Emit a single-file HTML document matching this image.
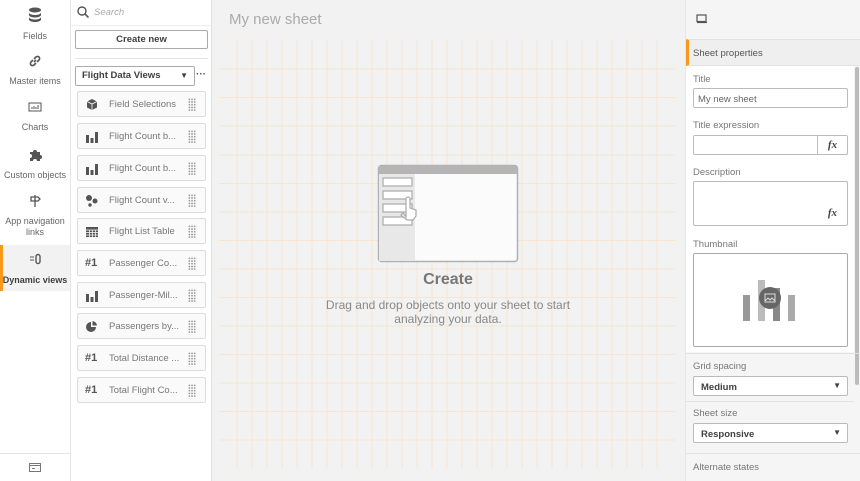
<!DOCTYPE html>
<html><head><meta charset="utf-8"><style>
*{box-sizing:border-box;margin:0;padding:0}
body{width:860px;height:481px;overflow:hidden;font-family:"Liberation Sans",sans-serif;background:#fff;position:relative;color:#595959}
.abs{position:absolute}
.nav{left:0;top:0;width:71px;height:481px;background:#fff;border-right:1px solid #e6e6e6}
.ni{position:absolute;left:0;width:70px;text-align:center;font-size:9px;color:#666;line-height:11px}
.assets{left:71px;top:0;width:141px;height:481px;background:#fff;border-right:1px solid #e0e0e0}
.card{position:absolute;left:6px;width:129px;height:26px;border:1px solid #ddd;border-radius:2px;background:#fafafa;font-size:9.5px;color:#777}
.card .ic{position:absolute;left:7px;top:6px;width:14px;height:13px;font-weight:bold;color:#555;font-size:11px}
.card .t{position:absolute;left:31px;top:7px}
.card .g{position:absolute;right:9px;top:6px;width:8px;height:13px;background-image:radial-gradient(circle,#999 0.7px,transparent 0.9px);background-size:2.7px 2.7px}
.canvas{left:212px;top:0;width:473px;height:481px;background:#f2f2f2}
.right{left:685px;top:0;width:175px;height:481px;background:#f5f5f5;border-left:1px solid #e6e6e6}
.lbl{position:absolute;left:7px;font-size:9.5px;color:#777}
.inp{position:absolute;left:7px;width:155px;border:1px solid #bbb;border-radius:2px;background:#fff;font-size:9.5px;color:#666}
.sec{position:absolute;left:0;width:175px;border-top:1px solid #e3e3e3}
</style></head><body>
<div class="abs nav">
 <div class="ni" style="top:7px"><svg width="14" height="15" viewBox="0 0 14 15"><ellipse cx="7" cy="3" rx="6" ry="2.5" fill="#555"/><path d="M1 5.5c0 1.4 2.7 2.5 6 2.5s6-1.1 6-2.5v2.5c0 1.4-2.7 2.5-6 2.5s-6-1.1-6-2.5zM1 10c0 1.4 2.7 2.5 6 2.5s6-1.1 6-2.5v2.5c0 1.4-2.7 2.5-6 2.5s-6-1.1-6-2.5z" fill="#555"/></svg><div style="margin-top:6px">Fields</div></div>
 <div class="ni" style="top:54px"><svg width="14" height="14" viewBox="0 0 14 14"><path d="M6 8l2-2M5 6L3 8a2 2 0 0 0 3 3l2-2M9 8l2-2a2 2 0 0 0-3-3L6 5" stroke="#555" stroke-width="1.6" fill="none"/></svg><div style="margin-top:5px">Master items</div></div>
 <div class="ni" style="top:101px"><svg width="14" height="12" viewBox="0 0 14 12"><rect x="1" y="2" width="12" height="8" fill="none" stroke="#555"/><path d="M4 8V6M6 8V5M8 8V6M10 8V4" stroke="#555"/></svg><div style="margin-top:6px">Charts</div></div>
 <div class="ni" style="top:148px"><svg width="14" height="14" viewBox="0 0 14 14"><path d="M2 4h3a2 2 0 1 1 4 0h3v3a2 2 0 1 1 0 4v2H9a2 2 0 1 0-4 0H2v-3a2 2 0 1 0 0-4z" fill="#555"/></svg><div style="margin-top:5px">Custom objects</div></div>
 <div class="ni" style="top:194px"><svg width="14" height="14" viewBox="0 0 14 14"><path d="M7 1v12M3 3h7l2 2-2 2H3z" stroke="#555" stroke-width="1.3" fill="none"/></svg><div style="margin-top:5px">App navigation<br>links</div></div>
 <div class="abs" style="left:0;top:245px;width:70px;height:46px;background:#f2f2f2;border-left:3px solid #f8981d"></div>
 <div class="ni" style="top:253px;font-weight:bold;color:#404040"><svg width="14" height="12" viewBox="0 0 14 12"><path d="M2 4h4M2 7h4" stroke="#555"/><rect x="8" y="1.5" width="4" height="9" rx="2" fill="none" stroke="#555" stroke-width="1.4"/></svg><div style="margin-top:7px">Dynamic views</div></div>
 <div class="abs" style="left:0;top:453px;width:70px;border-top:1px solid #e6e6e6"></div>
 <svg class="abs" style="left:29px;top:463px" width="12" height="9" viewBox="0 0 12 9"><rect x=".5" y=".5" width="11" height="8" fill="none" stroke="#777"/><path d="M.5 2.5h11M3 5.5h3" stroke="#777"/></svg>
</div>
<div class="abs assets">
 <svg class="abs" style="left:6px;top:6px" width="12" height="12" viewBox="0 0 12 12"><circle cx="5" cy="5" r="4" fill="none" stroke="#555" stroke-width="1.4"/><path d="M8 8l3.5 3.5" stroke="#555" stroke-width="1.6"/></svg>
 <div class="abs" style="left:23px;top:7px;font-size:9.5px;color:#aaa;font-style:italic">Search</div>
 <div class="abs" style="left:0;top:25px;width:141px;border-top:1px solid #eee"></div>
 <div class="abs" style="left:4px;top:30px;width:133px;height:19px;border:1px solid #aaa;border-radius:2px;font-size:9.5px;font-weight:bold;color:#404040;text-align:center;line-height:17px">Create new</div>
 <div class="abs" style="left:4px;top:58px;width:133px;border-top:1px solid #e6e6e6"></div>
 <div class="abs" style="left:4px;top:66px;width:120px;height:20px;border:1px solid #aaa;border-radius:2px;font-size:9.5px;font-weight:bold;color:#404040;line-height:18px;padding-left:6px">Flight Data Views<span style="position:absolute;right:6px;top:0;font-size:8px">▼</span></div>
 <div class="abs" style="left:125px;top:69px;font-size:10px;font-weight:bold;color:#555">···</div>
 <div class="card" style="top:91px"><svg class="ic" viewBox="0 0 14 13"><path d="M7 1l5 2.5v6L7 12 2 9.5v-6z" fill="#555"/><path d="M2 3.5L7 6l5-2.5M7 6v6" stroke="#fff" stroke-width=".8" fill="none"/></svg><span class="t">Field Selections</span><span class="g"></span></div>
 <div class="card" style="top:123px"><svg class="ic" viewBox="0 0 14 13"><path d="M1 5h3v8H1zM5.5 8h3v5h-3zM10 2h3v11h-3z" fill="#555"/></svg><span class="t">Flight Count b...</span><span class="g"></span></div>
 <div class="card" style="top:155px"><svg class="ic" viewBox="0 0 14 13"><path d="M1 5h3v8H1zM5.5 8h3v5h-3zM10 2h3v11h-3z" fill="#555"/></svg><span class="t">Flight Count b...</span><span class="g"></span></div>
 <div class="card" style="top:187px"><svg class="ic" viewBox="0 0 14 13"><circle cx="4" cy="4" r="3" fill="#555"/><circle cx="10" cy="7" r="2.5" fill="#555"/><circle cx="5" cy="11" r="1.7" fill="#555"/></svg><span class="t">Flight Count v...</span><span class="g"></span></div>
 <div class="card" style="top:218px"><svg class="ic" viewBox="0 0 14 13"><rect x="1" y="2" width="12" height="10" fill="#555"/><path d="M1 5h12M1 7.5h12M1 10h12M4.5 5v7M7.5 5v7M10.5 5v7" stroke="#fff" stroke-width=".7"/></svg><span class="t">Flight List Table</span><span class="g"></span></div>
 <div class="card" style="top:250px"><span class="ic" style="top:6px">#1</span><span class="t">Passenger Co...</span><span class="g"></span></div>
 <div class="card" style="top:282px"><svg class="ic" viewBox="0 0 14 13"><path d="M1 5h3v8H1zM5.5 8h3v5h-3zM10 2h3v11h-3z" fill="#555"/></svg><span class="t">Passenger-Mil...</span><span class="g"></span></div>
 <div class="card" style="top:313px"><svg class="ic" viewBox="0 0 14 13"><path d="M6 2a5 5 0 1 0 5 5H6z" fill="#555"/><path d="M7.5 1a5 5 0 0 1 4.5 4.5H7.5z" fill="#555"/></svg><span class="t">Passengers by...</span><span class="g"></span></div>
 <div class="card" style="top:345px"><span class="ic">#1</span><span class="t">Total Distance ...</span><span class="g"></span></div>
 <div class="card" style="top:377px"><span class="ic">#1</span><span class="t">Total Flight Co...</span><span class="g"></span></div>
</div>
<div class="abs canvas">
 <div class="abs" style="left:17px;top:11px;font-size:15px;color:#aaa">My new sheet</div>
 <svg class="abs" style="left:0;top:0" width="473" height="481">
  <g stroke="#f9e2c8" stroke-width="1" opacity="0.8">
   <path d="M25 40V468M40 40V468M55 40V468M70 40V468M85 40V468M100 40V468M115 40V468M130 40V468M145 40V468M160 40V468M175 40V468M190 40V468M205 40V468M220 40V468M235 40V468M250 40V468M265 40V468M280 40V468M295 40V468M310 40V468M325 40V468M340 40V468M355 40V468M370 40V468M385 40V468M400 40V468M415 40V468M430 40V468M445 40V468"/>
   <path d="M7 69H463M7 97.5H463M7 126H463M7 155H463M7 183.5H463M7 212H463M7 240.5H463M7 269H463M7 297.5H463M7 326H463M7 354.5H463M7 383H463M7 411.5H463M7 440H463"/>
  </g>
  <g transform="translate(166,165)">
   <rect x="0.5" y="0.5" width="139" height="96" rx="3" fill="#fbfbfb" stroke="#b0b0b0" stroke-width="1.5"/>
   <rect x="1" y="1" width="36" height="95" fill="#e8e8e8"/>
   <path d="M0.5 3.5a3 3 0 0 1 3-3h133a3 3 0 0 1 3 3V9H0.5z" fill="#b5b5b5"/>
   <g fill="#fff" stroke="#aaa" stroke-width="1.2"><rect x="5" y="13" width="29" height="8"/><rect x="5" y="26" width="29" height="8"/><rect x="5" y="39" width="29" height="8"/><rect x="5" y="52" width="29" height="8"/></g>
   <path d="M28 52V34a2 2 0 0 1 4 0v9l6 2v6l-3 4h-6l-6-5 2-2z" fill="#fff" stroke="#aaa" stroke-width="1.2"/>
  </g>
  <text x="236" y="284" text-anchor="middle" font-family="Liberation Sans" font-weight="bold" font-size="16" fill="#777">Create</text>
  <text x="236" y="309" text-anchor="middle" font-family="Liberation Sans" font-size="12" fill="#888">Drag and drop objects onto your sheet to start</text>
  <text x="236" y="323" text-anchor="middle" font-family="Liberation Sans" font-size="12" fill="#888">analyzing your data.</text>
 </svg>
</div>
<div class="abs right">
 <svg class="abs" style="left:10px;top:14px" width="12" height="10" viewBox="0 0 12 10"><rect x="1" y="1" width="9" height="6.5" fill="none" stroke="#555" stroke-width="1.2"/><path d="M1 8.5h10" stroke="#555" stroke-width="1.2"/></svg>
 <div class="sec" style="top:39px;height:27px;background:#efefef;border-left:3px solid #f8981d;border-bottom:1px solid #e3e3e3"><div style="position:absolute;left:4px;top:8px;font-size:9.5px;color:#555">Sheet properties</div></div>
 <div class="abs" style="left:0;top:66px;width:168px;height:286px;background:#fff"></div>
 <div class="abs" style="left:169px;top:67px;width:4px;height:318px;background:#bbb;border-radius:2px"></div>
 <div class="lbl" style="top:74px">Title</div>
 <div class="inp" style="top:88px;height:20px;padding:5px 4px">My new sheet</div>
 <div class="lbl" style="top:120px">Title expression</div>
 <div class="inp" style="top:135px;height:20px"><div style="position:absolute;right:0;top:0;width:30px;height:18px;border-left:1px solid #bbb;text-align:center;font-family:'Liberation Serif';font-style:italic;font-weight:bold;font-size:11px;line-height:18px;color:#444">fx</div></div>
 <div class="lbl" style="top:167px">Description</div>
 <div class="inp" style="top:181px;height:45px"><span style="position:absolute;right:10px;bottom:6px;font-family:'Liberation Serif';font-style:italic;font-weight:bold;font-size:11px;color:#444">fx</span></div>
 <div class="lbl" style="top:239px">Thumbnail</div>
 <div class="inp" style="top:253px;height:94px;border-color:#aaa;border-width:1.5px">
  <svg class="abs" style="left:48px;top:24px" width="58" height="44" viewBox="0 0 58 44"><rect x="1" y="17" width="7" height="26" fill="#999"/><rect x="16" y="2" width="7" height="41" fill="#bbb"/><rect x="31" y="10" width="7" height="33" fill="#888"/><rect x="46" y="17" width="7" height="26" fill="#aaa"/><circle cx="28" cy="20" r="11" fill="#666"/><rect x="23" y="16" width="10" height="8" fill="none" stroke="#ddd"/><path d="M23 23l3-3 2 2 2-2 3 3" stroke="#ddd" fill="none"/></svg>
 </div>
 <div class="sec" style="top:353px"></div>
 <div class="lbl" style="top:361px">Grid spacing</div>
 <div class="inp" style="top:376px;height:20px;font-weight:bold;color:#404040;padding:5px 7px">Medium<span style="position:absolute;right:6px;top:4px;font-size:8px">▼</span></div>
 <div class="sec" style="top:401px;width:168px"></div>
 <div class="lbl" style="top:408px">Sheet size</div>
 <div class="inp" style="top:423px;height:20px;font-weight:bold;color:#404040;padding:5px 7px">Responsive<span style="position:absolute;right:6px;top:4px;font-size:8px">▼</span></div>
 <div class="sec" style="top:453px"></div>
 <div class="lbl" style="top:462px">Alternate states</div>
</div>
</body></html>
